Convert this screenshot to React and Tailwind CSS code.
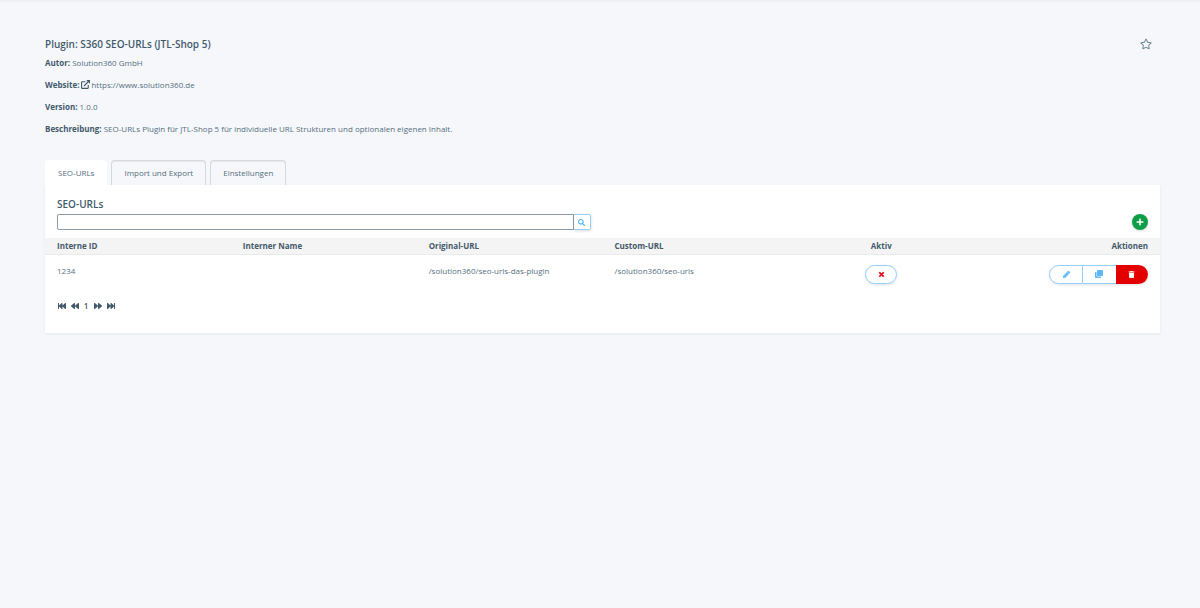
import { FaRegStar, FaSearch, FaPlus, FaTimes, FaPencilAlt, FaClone, FaTrash, FaFastBackward, FaBackward, FaForward, FaFastForward } from 'react-icons/fa';

const rows = [
  { id: '1234', name: '', original: '/solution360/seo-urls-das-plugin', custom: '/solution360/seo-urls' },
];

function ExternalLinkIcon() {
  return (
    <svg viewBox="0 0 18 18" className="mr-px ml-0.5 inline-block size-[9px] align-[-1px] text-[#435a6b]" fill="none" stroke="currentColor" strokeWidth="2.2" aria-hidden="true">
      <path d="M9 3.5H2.5Q1.2 3.5 1.2 5V15.3Q1.2 16.8 2.5 16.8H13Q14.5 16.8 14.5 15.3V10" />
      <path d="M6 12L15 3" />
      <path d="M10.5 0H18V7.5Z" fill="currentColor" stroke="none" />
    </svg>
  );
}

function Meta({ label, children }) {
  return (
    <p className="leading-3">
      <strong className="font-bold text-[#435a6b]">{label}:</strong>
      {children}
    </p>
  );
}

function Tab({ active, children }) {
  return (
    <button
      type="button"
      role="tab"
      aria-selected={active}
      className={
        active
          ? 'h-[25px] rounded-t-sm bg-white px-[13px]'
          : 'h-[25px] rounded-t-sm border-x border-t border-[#d5d8dc] px-3 shadow-[inset_0_1px_0_#e8e9ec]'
      }
    >
      {children}
    </button>
  );
}

function PageButton({ label, children }) {
  return (
    <button type="button" aria-label={label} className="flex w-[9px] justify-center">
      {children}
    </button>
  );
}

export default function App() {
  return (
    <div className="min-h-screen border-t-2 border-[#f0f1f4] bg-[#f5f7fb] px-10 pb-10 pt-9 font-['Open_Sans',sans-serif] text-[8px] text-[#566f7f]">
      <main className="pl-[5px]">
        <header className="flex items-start justify-between pr-2">
          <div>
            <h1 className="text-[10px] font-semibold leading-3 text-[#435a6b]">Plugin: S360 SEO-URLs (JTL-Shop 5)</h1>
            <div className="mt-[7px] flex flex-col gap-[10px]">
              <Meta label="Autor"> Solution360 GmbH</Meta>
              <Meta label="Website">
                <ExternalLinkIcon />
                <a href="https://www.solution360.de">https://www.solution360.de</a>
              </Meta>
              <Meta label="Version"> 1.0.0</Meta>
              <Meta label="Beschreibung"> SEO-URLs Plugin für JTL-Shop 5 für individuelle URL Strukturen und optionalen eigenen Inhalt.</Meta>
            </div>
          </div>
          <button type="button" aria-label="Favorit" className="text-[#6f8796]">
            <FaRegStar className="size-3" />
          </button>
        </header>

        <div role="tablist" className="mt-[25px] flex gap-1">
          <Tab active>SEO-URLs</Tab>
          <Tab active={false}>Import und Export</Tab>
          <Tab active={false}>Einstellungen</Tab>
        </div>

        <section className="bg-white pb-[21px] pt-3 shadow-[0_1px_3px_rgba(60,80,100,0.09)]">
          <h2 className="px-3 text-[10px] font-semibold leading-[14px] text-[#435a6b]">SEO-URLs</h2>
          <div className="mt-[3px] flex items-center justify-between px-3">
            <form className="flex w-1/2 pr-3" onSubmit={(e) => e.preventDefault()}>
              <input type="text" aria-label="Suche" className="h-4 min-w-0 flex-1 rounded-l-xs border border-[#8b9ba8] bg-white px-1 outline-none" />
              <button type="submit" aria-label="Suchen" className="flex h-4 w-[17px] items-center justify-center rounded-r-xs border border-l-0 border-[#94cff8] text-[#4fb0f5] shadow-[0_1px_3px_rgba(0,0,0,0.15)]">
                <FaSearch className="size-[7px]" />
              </button>
            </form>
            <button type="button" aria-label="Hinzufügen" className="flex size-4 items-center justify-center rounded-full bg-[#0f9d45] text-white shadow-[0_1px_3px_rgba(0,0,0,0.15)]">
              <FaPlus className="size-2" />
            </button>
          </div>

          <table className="mt-2 w-full table-fixed border-collapse text-left">
            <thead>
              <tr className="h-4 border-b border-[#eaebed] bg-[#f4f4f4] text-[#435a6b]">
                <th className="px-3 py-0 font-bold leading-3">Interne ID</th>
                <th className="px-3 py-0 font-bold leading-3">Interner Name</th>
                <th className="px-3 py-0 font-bold leading-3">Original-URL</th>
                <th className="px-3 py-0 font-bold leading-3">Custom-URL</th>
                <th className="px-3 py-0 text-center font-bold leading-3">Aktiv</th>
                <th className="px-3 py-0 text-right font-bold leading-3">Aktionen</th>
              </tr>
            </thead>
            <tbody>
              {rows.map((row) => (
                <tr key={row.id} className="align-top leading-3">
                  <td className="px-3 pt-[10px]">{row.id}</td>
                  <td className="px-3 pt-[10px]">{row.name}</td>
                  <td className="px-3 pt-[10px]">{row.original}</td>
                  <td className="px-3 pt-[10px]">{row.custom}</td>
                  <td className="px-3 pt-[10px]">
                    <button type="button" aria-label="Aktivieren" className="mx-auto flex h-[19px] w-8 items-center justify-center rounded-full border border-[#94cff8] text-[#e30613] shadow-[0_1px_3px_rgba(0,0,0,0.12)]">
                      <FaTimes className="size-[7px] stroke-current stroke-[40]" />
                    </button>
                  </td>
                  <td className="px-3 pt-[10px]">
                    <div className="ml-auto flex h-[19px] w-[99px] rounded-full text-[#5cb8f7] shadow-[0_1px_3px_rgba(0,0,0,0.12)]">
                      <button type="button" aria-label="Bearbeiten" className="flex flex-1 items-center justify-center rounded-l-full border border-[#94cff8]">
                        <FaPencilAlt className="size-[7px] stroke-current stroke-[30]" />
                      </button>
                      <button type="button" aria-label="Kopieren" className="flex flex-1 items-center justify-center border-y border-[#94cff8]">
                        <FaClone className="size-2" />
                      </button>
                      <button type="button" aria-label="Löschen" className="flex flex-1 items-center justify-center rounded-r-full bg-[#e30000] text-white">
                        <FaTrash className="size-[7px]" />
                      </button>
                    </div>
                  </td>
                </tr>
              ))}
            </tbody>
          </table>

          <nav aria-label="Seiten" className="mt-4 flex items-center gap-1 px-3 leading-3 text-[#435a6b]">
            <PageButton label="Erste Seite"><FaFastBackward className="size-2" /></PageButton>
            <PageButton label="Vorherige Seite"><FaBackward className="size-2" /></PageButton>
            <span className="w-1.5 text-center font-semibold">1</span>
            <PageButton label="Nächste Seite"><FaForward className="size-2" /></PageButton>
            <PageButton label="Letzte Seite"><FaFastForward className="size-2" /></PageButton>
          </nav>
        </section>
      </main>
    </div>
  );
}
